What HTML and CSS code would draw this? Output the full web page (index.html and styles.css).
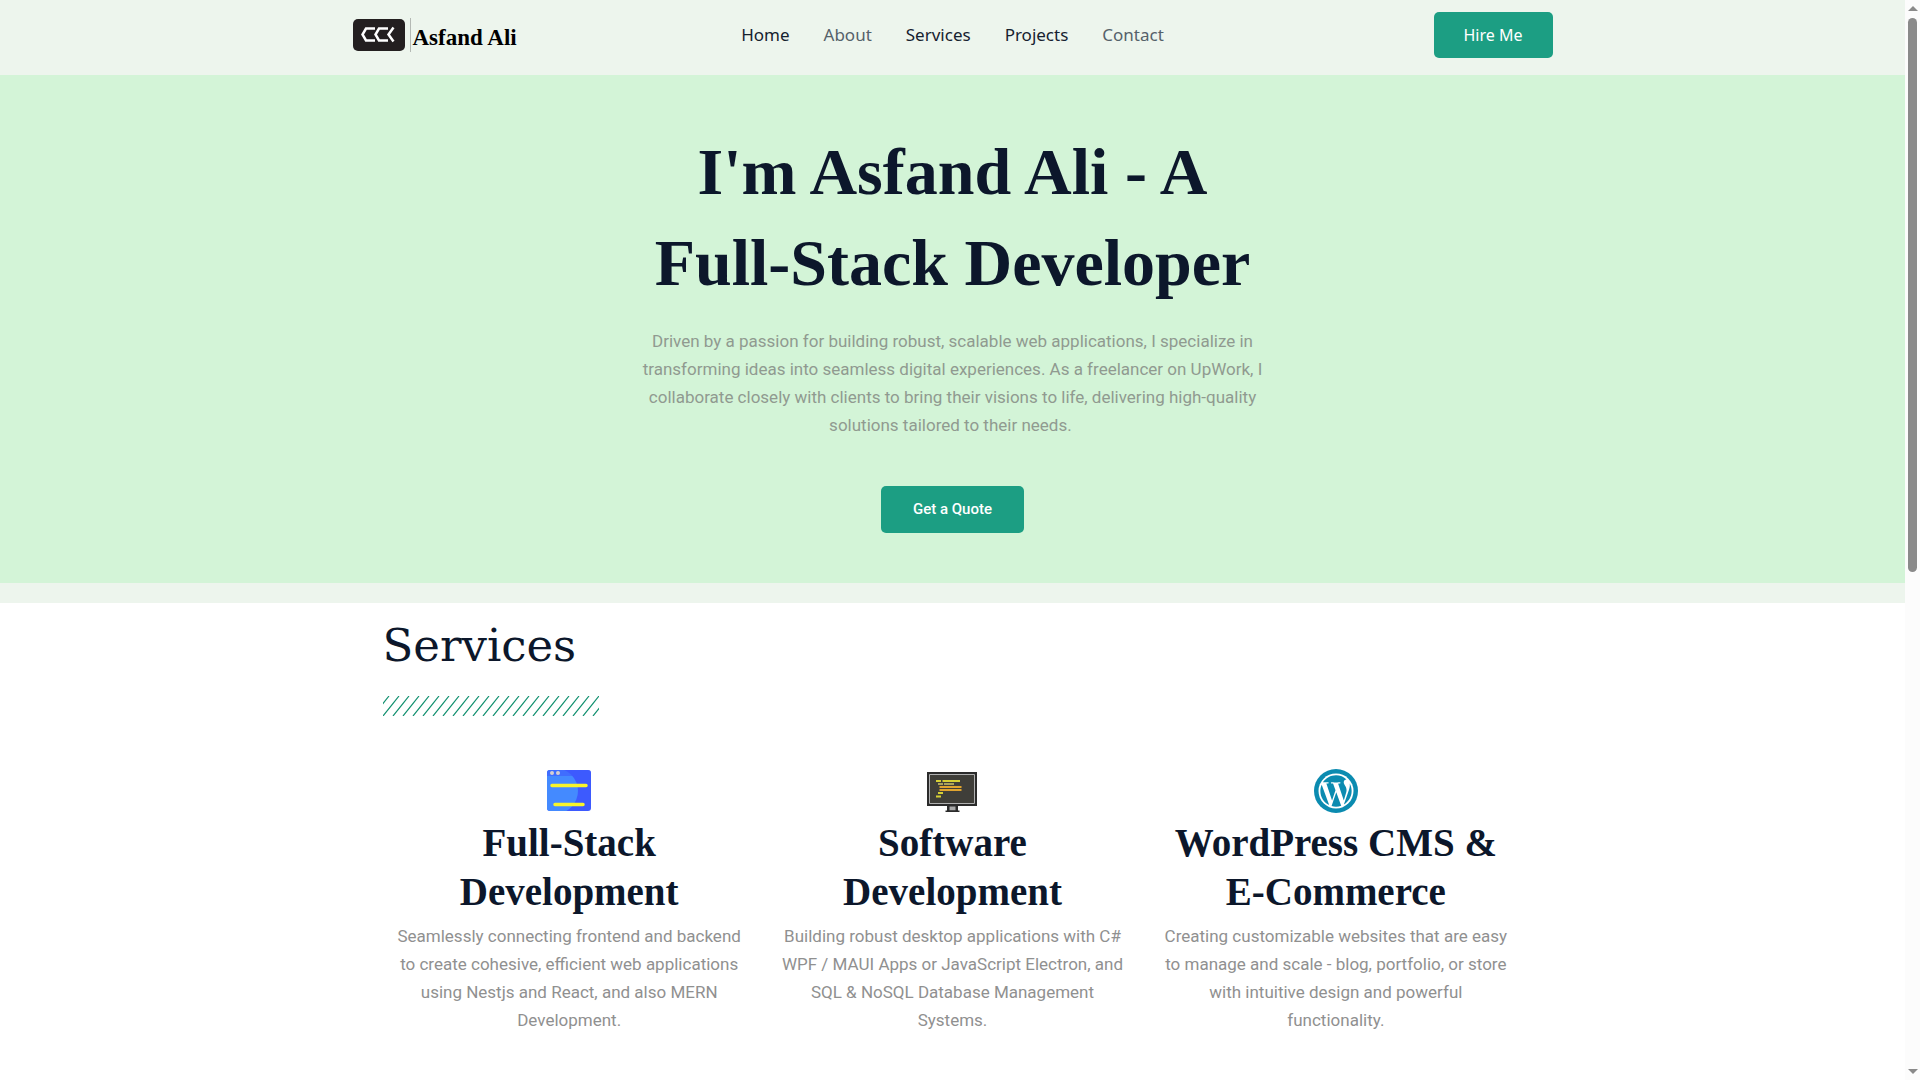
FILE: index.html
```html
<!DOCTYPE html>
<html lang="en">
<head>
<meta charset="utf-8">
<meta name="viewport" content="width=device-width, initial-scale=1">
<title>Asfand Ali - Full-Stack Developer</title>
<link rel="stylesheet" href="styles.css">
</head>
<body>
<div class="page">
  <header class="header">
    <div class="container header-row">
      <a class="brand" href="#">
        <svg class="brand-mark" viewBox="0 0 52 32" aria-hidden="true">
          <rect width="52" height="32" rx="5" fill="#231f20"/>
          <g fill="none" stroke="#fff" stroke-width="2.500">
            <path d="M22 9.500H13L9.500 15.500l3.500 6h9"/>
            <path d="M35 9.500h-9l-3.500 6 3.500 6h9"/>
            <path d="M40.500 8.500l-5 7 5 7"/>
          </g>
        </svg>
        <span class="brand-name">Asfand Ali</span>
      </a>
      <nav class="nav" aria-label="Main">
        <a class="nav-link" href="#home">Home</a>
        <a class="nav-link nav-link-muted" href="#about">About</a>
        <a class="nav-link" href="#services">Services</a>
        <a class="nav-link" href="#projects">Projects</a>
        <a class="nav-link nav-link-muted" href="#contact">Contact</a>
      </nav>
      <button class="button button-hire" type="button">Hire Me</button>
    </div>
  </header>
  <main>
    <section class="hero" id="home">
      <h1 class="hero-title">I'm Asfand Ali - A<br>Full-Stack Developer</h1>
      <p class="hero-text">Driven by a passion for building robust, scalable web applications, I specialize in transforming ideas into seamless digital experiences. As a freelancer on UpWork, I collaborate closely with clients to bring their visions to life, delivering high-quality solutions tailored to their needs.&nbsp;</p>
      <button class="button button-quote" type="button">Get a Quote</button>
    </section>
    <section class="services" id="services">
      <div class="container">
        <div class="services-head">
          <h2 class="services-title">Services</h2>
          <svg class="stripes" width="216" height="20" aria-hidden="true">
            <defs>
              <pattern id="slashes" width="10" height="20" patternUnits="userSpaceOnUse">
                <path d="M-10 20L6 0M0 20L16 0M10 20L26 0" stroke="#12906f" stroke-width="1.200"/>
              </pattern>
            </defs>
            <rect width="216" height="20" fill="url(#slashes)"/>
          </svg>
        </div>
        <div class="cards">
          <article class="card">
            <svg class="card-icon" viewBox="0 0 50 50" aria-hidden="true">
              <clipPath id="window"><rect x="3" y="4" width="44" height="41" rx="3"/></clipPath>
              <g clip-path="url(#window)">
                <rect x="3" y="4" width="44" height="41" fill="#3d5afe"/>
                <circle cx="11" cy="25" r="23" fill="#448aff"/>
                <rect x="3" y="4" width="44" height="6" fill="#3d5afe" opacity=".6"/>
              </g>
              <circle cx="8" cy="7" r="2" fill="#d6cfd0"/>
              <circle cx="14" cy="7" r="2" fill="#d6cfd0"/>
              <path d="M8 19.500h34M11 38.500h28" stroke="#f8f52a" stroke-width="3.500" stroke-linecap="round"/>
            </svg>
            <h3 class="card-title">Full-Stack Development</h3>
            <p class="card-text">Seamlessly connecting frontend and backend to create cohesive, efficient web applications using Nestjs and React, and also MERN Development.</p>
          </article>
          <article class="card">
            <svg class="card-icon" viewBox="0 0 50 50" aria-hidden="true">
              <path d="M0 6h50v34H0z" fill="#2b2b2b"/>
              <path d="M2.500 8.500h45v29h-45z" fill="#3f3e39" stroke="#b0b0b0"/>
              <path d="M20 40h11v6H20z" fill="#2b2b2b"/>
              <path d="M22.500 40.500h6v4h-6z" fill="#a8a8a8"/>
              <path d="M18.500 44.500h14V46h-14z" fill="#2b2b2b"/>
              <g fill="none" stroke-width="2">
                <path d="M9 15h5M15.500 15H33M11 27h5M9 30.500h5" stroke="#d5cf35"/>
                <path d="M11 18h5M17 18h10" stroke="#aaa25a"/>
                <path d="M12.500 21h22M12.500 24h22" stroke="#e0a42f"/>
              </g>
            </svg>
            <h3 class="card-title">Software Development</h3>
            <p class="card-text">Building robust desktop applications with C# WPF / MAUI Apps or JavaScript Electron, and SQL &amp; NoSQL Database Management Systems.</p>
          </article>
          <article class="card">
            <svg class="card-icon" viewBox="0 0 50 50" aria-hidden="true">
              <circle cx="25" cy="25" r="22" fill="#0b8bb0"/>
              <circle cx="25" cy="25" r="17.500" fill="#fff"/>
              <path transform="translate(7.600 7.600) scale(1.450)" fill="#0b8bb0" d="M21.469 6.825c.84 1.537 1.318 3.300 1.318 5.175 0 3.979-2.156 7.456-5.363 9.325l3.295-9.527c.615-1.540.820-2.771.820-3.864 0-.405-.026-.780-.070-1.110m-7.981.105c.647-.030 1.232-.105 1.232-.105.582-.075.514-.930-.067-.899 0 0-1.755.135-2.880.135-1.064 0-2.850-.150-2.850-.150-.585-.030-.661.855-.075.885 0 0 .540.061 1.125.090l1.680 4.605-2.370 7.080L5.354 6.900c.649-.030 1.234-.100 1.234-.100.585-.075.516-.930-.065-.896 0 0-1.746.138-2.874.138-.200 0-.438-.008-.690-.015C4.911 3.150 8.235 1.215 12 1.215c2.809 0 5.365 1.072 7.286 2.833-.046-.003-.091-.009-.141-.009-1.060 0-1.812.923-1.812 1.914 0 .890.513 1.643 1.060 2.531.411.720.890 1.643.890 2.977 0 .915-.354 1.994-.821 3.479l-1.075 3.585-3.900-11.610zM12 22.784c-1.059 0-2.081-.153-3.048-.437l3.237-9.406 3.315 9.087c.024.053.050.101.078.149-1.120.393-2.325.609-3.582.609M1.211 12c0-1.564.336-3.050.935-4.390L7.290 21.709C3.694 19.960 1.212 16.271 1.211 12z"/>
            </svg>
            <h3 class="card-title">WordPress CMS &amp; E-Commerce</h3>
            <p class="card-text">Creating customizable websites that are easy to manage and scale - blog, portfolio, or store with intuitive design and powerful functionality.</p>
          </article>
        </div>
      </div>
    </section>
  </main>
</div>
<div class="scrollbar" aria-hidden="true">
  <span class="scroll-arrow scroll-arrow-up"></span>
  <span class="scroll-thumb"></span>
  <span class="scroll-space"></span>
  <span class="scroll-arrow scroll-arrow-down"></span>
</div>
</body>
</html>
```
FILE: styles.css
```css
* {
  box-sizing: border-box;
}

html {
  scrollbar-width: none;
}

body {
  margin: 0;
  padding-right: 15px;
  background: #fff;
  color: #0c172b;
  font-family: Roboto, "Liberation Sans", sans-serif;
}

h1,
h2,
h3,
p {
  margin: 0;
}

.container {
  max-width: 1200px;
  margin: 0 auto;
}

.header {
  padding: 12px 0 17px;
  background: #edf5ed;
}

.header-row {
  display: grid;
  grid-template-columns: 1fr auto 1fr;
  align-items: center;
}

.brand {
  display: flex;
  align-items: center;
  gap: 5px;
  color: #000;
  text-decoration: none;
}

.brand-mark {
  width: 52px;
  height: 32px;
}

.brand-name {
  padding: 8px 0 2px 2px;
  border-left: 1px solid #b4b9b4;
  font: bold 23px/24px "Liberation Serif", serif;
}

.nav {
  display: flex;
  gap: 34px;
}

.nav-link {
  color: #16212f;
  font: 17px/24px "Noto Sans", sans-serif;
  text-decoration: none;
}

.nav-link-muted {
  color: #55616a;
}

.button {
  border: 0;
  border-radius: 5px;
  background: #1c9e83;
  color: #fff;
  cursor: pointer;
}

.button-hire {
  justify-self: end;
  padding: 11px 30px;
  font: 16px/24px "Noto Sans", sans-serif;
}

.button-quote {
  padding: 12px 32px;
  font: 500 15px/23px Roboto, sans-serif;
}

.hero {
  padding: 51px 24px 50px;
  border-bottom: 20px solid #edf5ed;
  background: #d3f4d7;
  text-align: center;
}

.hero-title {
  font: bold 66px/91px "Liberation Serif", serif;
}

.hero-text {
  max-width: 640px;
  margin: 19px auto 47px;
  color: #909a90;
  font-size: 17px;
  line-height: 28px;
}

.services {
  padding: 10px 0 48px;
}

.services-head {
  padding: 0 30px;
}

.services-title {
  font: 45px/66px "DejaVu Serif", serif;
}

.stripes {
  display: block;
  margin-top: 17px;
}

.cards {
  display: grid;
  grid-template-columns: repeat(3, 1fr);
  padding: 50px 25px 0;
}

.card {
  padding: 0 18px;
  text-align: center;
}

.card-icon {
  display: block;
  width: 50px;
  height: 50px;
  margin: 0 auto;
}

.card-title {
  padding: 2px 0 6px;
  font: bold 39px/49px "Liberation Serif", serif;
}

.card-text {
  color: #909090;
  font-size: 17px;
  line-height: 28px;
}

.scrollbar {
  position: fixed;
  top: 0;
  right: 0;
  bottom: 0;
  display: flex;
  flex-direction: column;
  align-items: center;
  width: 15px;
  padding: 6px 0;
  background: #fcfcfc;
}

.scroll-arrow {
  border: 0 solid transparent;
  border-width: 0 5px;
}

.scroll-arrow-up {
  border-bottom: 5px solid #8a8a8a;
}

.scroll-arrow-down {
  border-top: 5px solid #8a8a8a;
}

.scroll-thumb {
  flex: 553;
  width: 9px;
  margin-top: 7px;
  border-radius: 5px;
  background: #8a8a8a;
}

.scroll-space {
  flex: 497;
}
```
